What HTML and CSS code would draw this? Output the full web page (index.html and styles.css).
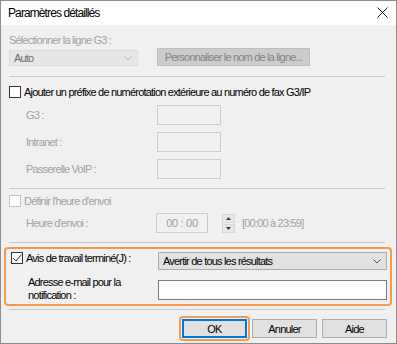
FILE: index.html
```html
<!DOCTYPE html>
<html lang="fr">
<head>
<meta charset="utf-8">
<title>Paramètres détaillés</title>
<link rel="stylesheet" href="styles.css">
</head>
<body>
<div class="dialog">
  <div class="titlebar">
    <span class="title">Paramètres détaillés</span>
    <svg class="close" width="11" height="11" viewBox="0 0 11 11"><path d="M0.5 0.5 L10.5 10.5 M10.5 0.5 L0.5 10.5" stroke="#1a1a1a" stroke-width="1" fill="none"/></svg>
  </div>
  <div class="content">
    <div class="lbl dis top-lbl">Sélectionner la ligne G3 :</div>
    <div class="line-row">
      <div class="combo combo-dis"><span>Auto</span><svg class="chev" width="8" height="5" viewBox="0 0 8 5"><path d="M0.5 0.5 L4 4 L7.5 0.5" stroke="#b5b5b5" fill="none"/></svg></div>
      <div class="btn btn-dis">Personnaliser le nom de la ligne...</div>
    </div>
    <div class="sep sep1"></div>
    <div class="check-row cr1"><span class="cb"></span><span class="ctext">Ajouter un préfixe de numérotation extérieure au numéro de fax G3/IP</span></div>
    <div class="fields">
      <span class="flabel dis">G3 :</span><span class="tbox tbox-dis"></span>
      <span class="flabel dis">Intranet :</span><span class="tbox tbox-dis"></span>
      <span class="flabel dis">Passerelle VoIP :</span><span class="tbox tbox-dis"></span>
    </div>
    <div class="sep sep2"></div>
    <div class="check-row cr2"><span class="cb cb-dis"></span><span class="ctext dis">Définir l'heure d'envoi</span></div>
    <div class="time-row">
      <span class="flabel dis">Heure d'envoi :</span>
      <span class="timebox">00 : 00</span>
      <span class="spin">
        <span class="spin-btn"><svg width="5" height="3" viewBox="0 0 5 3"><path d="M0 3 L2.5 0 L5 3 Z" fill="#3a3a3a"/></svg></span>
        <span class="spin-btn"><svg width="5" height="3" viewBox="0 0 5 3"><path d="M0 0 L2.5 3 L5 0 Z" fill="#3a3a3a"/></svg></span>
      </span>
      <span class="range dis">[00:00 à 23:59]</span>
    </div>
    <div class="sep sep3"></div>
    <div class="hl-box">
      <div class="notify-grid">
        <div class="check-row cr3"><span class="cb cb-on"><svg width="10" height="10" viewBox="0 0 10 10"><path d="M1 5 L4 8 L9.5 1.5" stroke="#333" stroke-width="1" fill="none"/></svg></span><span class="ctext">Avis de travail terminé(J) :</span></div>
        <div class="combo combo-on"><span>Avertir de tous les résultats</span><svg class="chev" width="8" height="5" viewBox="0 0 8 5"><path d="M0.5 0.5 L4 4 L7.5 0.5" stroke="#555" fill="none"/></svg></div>
        <div class="mail-lbl">Adresse e-mail pour la<br>notification :</div>
        <div class="tbox tbox-on"></div>
      </div>
    </div>
    <div class="sep sep4"></div>
    <div class="btn-row">
      <div class="btn btn-ok">OK</div>
      <div class="btn">Annuler</div>
      <div class="btn">Aide</div>
    </div>
  </div>
</div>
</body>
</html>
```
FILE: styles.css
```css
* { box-sizing: border-box; }
html, body { margin: 0; padding: 0; background: #f0f0f0; }
body {
  font-family: "Liberation Sans", Arial, sans-serif;
  font-size: 11px;
  letter-spacing: -0.8px;
  color: #000;
}
.dialog {
  width: 397px;
  height: 344px;
  border: 1px solid #8c8c8c;
  background: #f0f0f0;
  display: flex;
  flex-direction: column;
}
.titlebar {
  height: 24px;
  background: #fff;
  display: flex;
  align-items: center;
  justify-content: space-between;
  padding: 0 8px 0 7px;
  flex: none;
}
.title { font-size: 12px; letter-spacing: -0.9px; color: #000; }
.close { display: block; margin-top: -1px; }
.content {
  padding: 0 9px 0 8px;
  display: flex;
  flex-direction: column;
  white-space: nowrap;
}
.dis { color: #a2a2a2; }
.top-lbl { margin-top: 8px; line-height: 14px; }
.line-row {
  margin-top: 1px;
  display: flex;
  align-items: flex-start;
  height: 18px;
}
.combo {
  display: flex;
  align-items: center;
  justify-content: space-between;
  padding: 0 5px 0 4px;
}
.combo-dis {
  margin-top: 2px;
  width: 129px;
  height: 16px;
  background: #e6e6e6;
  border: 1px solid #dcdcdc;
  color: #6e6e6e;
}
.btn {
  width: 65px;
  height: 19px;
  background: #e1e1e1;
  border: 1px solid #adadad;
  display: flex;
  align-items: center;
  justify-content: center;
  color: #000;
}
.btn-dis {
  margin-left: 19px;
  width: 153px;
  height: 18px;
  background: #cccccc;
  border-color: #bfbfbf;
  color: #838383;
}
.sep {
  height: 1px;
  background: #c9c9c9;
  margin-right: 2px;
}
.sep1 { margin-top: 10px; }
.check-row {
  display: flex;
  align-items: center;
  height: 13px;
}
.cr1 { margin-top: 8px; }
.cb {
  width: 12px;
  height: 12px;
  border: 1px solid #333;
  background: #fff;
  flex: none;
  display: flex;
  align-items: center;
  justify-content: center;
}
.cb-dis { border-color: #c4c4c4; }
.ctext { margin-left: 3px; }
.fields {
  margin-top: 7px;
  display: grid;
  grid-template-columns: 131px 64px;
  row-gap: 7px;
  padding-left: 17px;
}
.fields .flabel { line-height: 20px; }
.tbox { height: 20px; display: block; }
.tbox-dis { border: 1px solid #cccccc; background: #f0f0f0; }
.tbox-on { border: 1px solid #7a7a7a; background: #fff; }
.sep2 { margin-top: 9px; }
.cr2 { margin-top: 5px; }
.time-row {
  margin-top: 6px;
  display: flex;
  align-items: center;
  height: 20px;
  padding-left: 17px;
}
.time-row .flabel { width: 130px; }
.timebox {
  width: 52px;
  height: 20px;
  border: 1px solid #cccccc;
  color: #9c9c9c;
  display: flex;
  align-items: center;
  justify-content: center;
  padding-bottom: 1px;
  letter-spacing: -0.3px;
}
.spin {
  margin-left: 14px;
  display: flex;
  flex-direction: column;
  gap: 1px;
  width: 13px;
}
.spin-btn {
  height: 9px;
  border: 1px solid #d6d6d6;
  background: #e6e6e6;
  display: flex;
  align-items: center;
  justify-content: center;
}
.spin-btn svg { display: block; }
.range { margin-left: 7px; }
.sep3 { margin-top: 9px; }
.hl-box {
  margin: 4px -5px 0 -5px;
  border: 2px solid #f39c51;
  border-radius: 4px;
  padding: 3px 3px 2px 5px;
}
.notify-grid {
  display: grid;
  grid-template-columns: 147px 1fr;
  row-gap: 10px;
}
.cr3 { margin-top: -1px; }
.cb-on svg { display: block; }
.combo-on {
  height: 18px;
  background: #e1e1e1;
  border: 1px solid #adadad;
  padding-left: 4px;
}
.mail-lbl {
  padding-left: 17px;
  line-height: 13px;
  margin-top: -4px;
}
.sep4 { margin-top: 3px; }
.btn-row {
  margin-top: 9px;
  display: flex;
  justify-content: flex-end;
  gap: 5px;
}
.btn-ok {
  position: relative;
  border: 2px solid #0078d7;
}
.btn-ok::after {
  content: "";
  position: absolute;
  inset: -5px;
  border: 2px solid #f39c51;
  border-radius: 4px;
}
```
